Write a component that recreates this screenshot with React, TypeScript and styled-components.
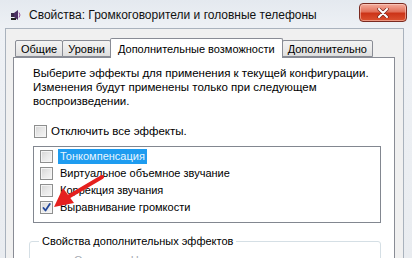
import styled, { createGlobalStyle } from 'styled-components';

const GlobalStyle = createGlobalStyle`
  html, body {
    margin: 0;
    padding: 0;
    background: #e9edf2;
  }
  body {
    font-family: "Liberation Sans", Arial, sans-serif;
    font-size: 11px;
    color: #000;
  }
`;

const Window = styled.div`
  position: relative;
  width: 412px;
  height: 258px;
  overflow: hidden;
  background: linear-gradient(180deg, #e4e9ef 0%, #eef1f5 30px, #e9ecf0 100%);
  display: flex;
  flex-direction: column;
`;

const TitleBar = styled.div`
  height: 28px;
  flex: none;
  display: flex;
  align-items: flex-start;
  padding-left: 10px;
`;

const TitleText = styled.span`
  margin-top: 8px;
  margin-left: 7px;
  font-size: 12px;
  line-height: 15px;
  color: #111;
  white-space: nowrap;
`;

const IconWrap = styled.span`
  margin-top: 9px;
  width: 12px;
  height: 12px;
  display: flex;
`;

const CloseButton = styled.div`
  margin-left: auto;
  margin-right: 5px;
  margin-top: 3px;
  width: 46px;
  height: 17px;
  border: 1px solid #7a2a20;
  border-radius: 4px;
  background: linear-gradient(180deg, #f4ad9e 0%, #e2715a 45%, #cc3418 55%, #dc5230 100%);
  box-shadow: inset 0 0 0 1px rgba(255, 220, 210, 0.5);
  display: flex;
  align-items: center;
  justify-content: center;
`;

const Client = styled.div`
  flex: 1;
  margin-left: 5px;
  margin-right: 8px;
  background: #f0f0f0;
  border-top: 1px solid #a9b2bd;
  border-left: 1px solid #a9b2bd;
  border-right: 1px solid #a9b2bd;
  padding: 8px 8px 0 7px;
  display: flex;
  flex-direction: column;
`;

const TabStrip = styled.div`
  display: flex;
  align-items: flex-end;
  height: 20px;
  padding-left: 2px;
  position: relative;
  z-index: 1;
`;

const Tab = styled.div<{ $active?: boolean }>`
  height: ${(p) => (p.$active ? '20px' : '17px')};
  box-sizing: border-box;
  padding: ${(p) => (p.$active ? '3px 7px 0' : '1px 5px 0')};
  margin-bottom: ${(p) => (p.$active ? '-1px' : '0')};
  border: 1px solid #898c95;
  border-bottom: ${(p) => (p.$active ? 'none' : '1px solid #898c95')};
  border-radius: 2px 2px 0 0;
  background: ${(p) => (p.$active ? '#fff' : 'linear-gradient(180deg, #f3f3f3 0%, #ebebeb 50%, #dedede 100%)')};
  margin-right: -1px;
  font-size: 11px;
  line-height: 14px;
  white-space: nowrap;
`;

const Panel = styled.div`
  flex: 1;
  background: #fff;
  border: 1px solid #898c95;
  border-bottom: none;
  padding: 8px 13px 0 19px;
  display: flex;
  flex-direction: column;
`;

const Intro = styled.p`
  margin: 0;
  line-height: 14px;
  font-size: 11.5px;
  white-space: nowrap;
`;

const CheckRow = styled.label`
  display: flex;
  align-items: center;
  gap: 4px;
  height: 17px;
  line-height: 17px;
  white-space: nowrap;
`;

const TopCheck = styled(CheckRow)`
  margin-top: 15px;
  margin-left: 1px;
  font-size: 11.5px;
`;

const Box = styled.span`
  width: 13px;
  height: 13px;
  box-sizing: border-box;
  flex: none;
  border: 1px solid #8e8f8f;
  background: linear-gradient(135deg, #d4d4d4 0%, #e8e8e8 50%, #f6f6f6 100%);
  box-shadow: inset 0 0 0 1px #f4f4f4;
  display: flex;
  align-items: center;
  justify-content: center;
`;

const ListBox = styled.div`
  margin-top: 6px;
  height: 77px;
  box-sizing: border-box;
  border: 1px solid #828790;
  padding: 1px 0 0 6px;
  display: flex;
  flex-direction: column;
`;

const ItemText = styled.span<{ $selected?: boolean }>`
  padding: 0 2px;
  margin-left: 1px;
  line-height: 15px;
  font-size: 11px;
  background: ${(p) => (p.$selected ? '#1e9cf0' : 'transparent')};
  color: ${(p) => (p.$selected ? '#e8f6ff' : '#000')};
`;

const Group = styled.fieldset`
  margin: 11px 0 0 -4px;
  padding: 0 8px;
  border: 1px solid #d5dfe5;
  border-radius: 3px;
  min-height: 40px;
`;

const Legend = styled.legend`
  padding: 0 3px;
  margin-left: 1px;
  font-size: 11px;
  line-height: 14px;
`;

const GroupLine = styled.div`
  margin-top: 6px;
  padding-left: 36px;
  color: #a4aab2;
  white-space: nowrap;
`;

const Overlay = styled.svg`
  position: absolute;
  left: 0;
  top: 0;
  pointer-events: none;
`;

const Check = () => (
  <svg width="9" height="9" viewBox="0 0 9 9">
    <path d="M1.5 5 L3.5 7.5 L7.8 1" fill="none" stroke="#22479a" strokeWidth="1.8" strokeLinecap="round" strokeLinejoin="round" />
  </svg>
);

const Checkbox = ({ checked }: { checked?: boolean }) => <Box>{checked && <Check />}</Box>;

const items = [
  { label: 'Тонкомпенсация', selected: true },
  { label: 'Виртуальное объемное звучание' },
  { label: 'Коррекция звучания' },
  { label: 'Выравнивание громкости', checked: true },
];

const App = (): JSX.Element => (
  <>
    <GlobalStyle />
    <Window>
      <TitleBar>
        <IconWrap>
          <svg width="12" height="12" viewBox="0 0 12 12">
            <rect x="1" y="4" width="3" height="4" fill="#3a2a4a" />
            <path d="M4 4 L8 1 L8 11 L4 8 Z" fill="#4b2f63" />
            <path d="M9 3.5 Q11 6 9 8.5" fill="none" stroke="#9a4fa0" strokeWidth="1" />
            <rect x="1" y="9" width="5" height="2" fill="#222" />
          </svg>
        </IconWrap>
        <TitleText>Свойства: Громкоговорители и головные телефоны</TitleText>
        <CloseButton>
          <svg width="12" height="10" viewBox="0 0 12 10">
            <path d="M2 1 L10 9 M10 1 L2 9" stroke="#7a2a20" strokeWidth="3.4" strokeLinecap="round" />
            <path d="M2 1 L10 9 M10 1 L2 9" stroke="#fff" strokeWidth="2" strokeLinecap="round" />
          </svg>
        </CloseButton>
      </TitleBar>
      <Client>
        <TabStrip>
          <Tab>Общие</Tab>
          <Tab>Уровни</Tab>
          <Tab $active>Дополнительные возможности</Tab>
          <Tab>Дополнительно</Tab>
        </TabStrip>
        <Panel>
          <Intro>
            Выберите эффекты для применения к текущей конфигурации.
            <br />
            Изменения будут применены только при следующем
            <br />
            воспроизведении.
          </Intro>
          <TopCheck>
            <Checkbox />
            Отключить все эффекты.
          </TopCheck>
          <ListBox>
            {items.map((it) => (
              <CheckRow key={it.label}>
                <Checkbox checked={it.checked} />
                <ItemText $selected={it.selected}>{it.label}</ItemText>
              </CheckRow>
            ))}
          </ListBox>
          <Group>
            <Legend>Свойства дополнительных эффектов</Legend>
            <GroupLine>Описание: Нормализует различия громкости</GroupLine>
          </Group>
        </Panel>
      </Client>
      <Overlay width="412" height="258" viewBox="0 0 412 258">
        <line x1="102" y1="177" x2="68" y2="197" stroke="#e5201e" strokeWidth="4" strokeLinecap="round" />
        <path d="M54 207 L63 188 L74 203 Z" fill="#e5201e" />
      </Overlay>
    </Window>
  </>
);

export default App;
